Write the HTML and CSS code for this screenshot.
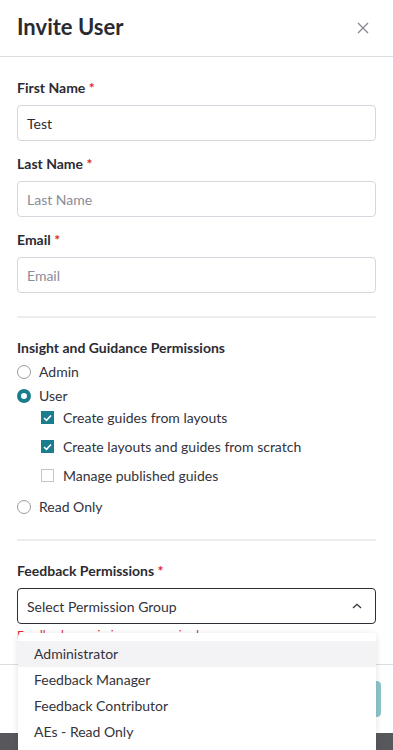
FILE: index.html
```html
<!DOCTYPE html>
<html lang="en">
<head>
  <meta charset="UTF-8" />
  <title>Invite User</title>
  <meta name="viewport" content="width=device-width, initial-scale=1.0" />
  <link rel="stylesheet" href="styles.css">
</head>
<body>
  <div class="modal">
    <header class="modal-header">
      <h1>Invite User</h1>
      <button class="close" aria-label="Close">
        <svg width="12" height="12" viewBox="0 0 12 12"><path d="M1 1L11 11M11 1L1 11" stroke="#8a8a94" stroke-width="1.4" fill="none"/></svg>
      </button>
    </header>

    <div class="modal-body">
      <!-- Basic info -->
      <div class="field">
        <label>First Name <span class="req">*</span></label>
        <input type="text" value="Test" />
      </div>
      <div class="field">
        <label>Last Name <span class="req">*</span></label>
        <input type="text" placeholder="Last Name" />
      </div>
      <div class="field">
        <label>Email <span class="req">*</span></label>
        <input type="email" placeholder="Email" />
      </div>

      <hr class="divider" />

      <!-- Insight permissions -->
      <div class="group">
        <div class="group-title">Insight and Guidance Permissions</div>
        <div class="radio"><span class="dot"></span>Admin</div>
        <div class="radio"><span class="dot on"></span>User</div>
        <div class="checks">
          <div class="check"><span class="box on"><svg width="9" height="8" viewBox="0 0 9 8"><path d="M1 4L3.5 6.3L8 1.5" stroke="#fff" stroke-width="1.6" fill="none"/></svg></span>Create guides from layouts</div>
          <div class="check"><span class="box on"><svg width="9" height="8" viewBox="0 0 9 8"><path d="M1 4L3.5 6.3L8 1.5" stroke="#fff" stroke-width="1.6" fill="none"/></svg></span>Create layouts and guides from scratch</div>
          <div class="check"><span class="box"></span>Manage published guides</div>
        </div>
        <div class="radio"><span class="dot"></span>Read Only</div>
      </div>

      <hr class="divider" />

      <!-- Feedback permissions -->
      <div class="field select-field">
        <label>Feedback Permissions <span class="req">*</span></label>
        <div class="select">
          <span>Select Permission Group</span>
          <svg width="10" height="6" viewBox="0 0 10 6"><path d="M1 5L5 1.3L9 5" stroke="#333" stroke-width="1.3" fill="none"/></svg>
        </div>
        <div class="error">Feedback permissions are required.</div>
        <ul class="dropdown">
          <li class="active">Administrator</li>
          <li>Feedback Manager</li>
          <li>Feedback Contributor</li>
          <li>AEs - Read Only</li>
        </ul>
      </div>
    </div>

    <footer class="modal-footer">
      <button class="btn">Cancel</button>
      <button class="btn primary">Invite</button>
    </footer>
  </div>
  <div class="backdrop"></div>
</body>
</html>
```
FILE: styles.css
```css
body {
  margin: 0;
  font-family: 'Lato', 'Open Sans', sans-serif;
  background: #fff;
  color: #2b2b33;
  width: 393px;
  height: 750px;
  overflow: hidden;
}

.modal {
  height: 733px;
  display: flex;
  flex-direction: column;
  background: #fff;
}

.modal-header {
  display: flex;
  justify-content: space-between;
  align-items: center;
  height: 56px;
  padding: 0 24px 0 17px;
  border-bottom: 1px solid #dcdce3;
  box-sizing: content-box;
}

.modal-header h1 {
  margin: 0;
  font-size: 22px;
  font-weight: 700;
  color: #2a2a32;
  padding-bottom: 4px;
}

.close {
  background: none;
  border: none;
  padding: 0;
  display: flex;
}

.modal-body {
  flex: 1;
  padding: 23px 17px 0;
}

.field {
  margin-bottom: 15px;
}

.field label {
  display: block;
  font-size: 14px;
  font-weight: 700;
  margin-bottom: 9px;
  line-height: 16px;
}

.req {
  color: #e0262f;
}

.field input {
  box-sizing: border-box;
  width: 100%;
  height: 36px;
  border: 1px solid #d6d6de;
  border-radius: 4px;
  padding: 0 9px;
  font-family: inherit;
  font-size: 14px;
  color: #2b2b33;
}

.field input::placeholder {
  color: #8c8c96;
}

.divider {
  border: none;
  height: 2px;
  background: #ededf0;
  margin: 23px 0 22px;
}

.group-title {
  font-size: 14px;
  font-weight: 700;
  line-height: 16px;
  margin-bottom: 4px;
}

.radio, .check {
  display: flex;
  align-items: center;
  font-size: 14px;
  line-height: 16px;
  color: #33333b;
}

.radio {
  height: 24px;
}

.dot {
  box-sizing: border-box;
  width: 14px;
  height: 14px;
  border-radius: 50%;
  border: 1px solid #9a9aa3;
  margin-right: 8px;
}

.dot.on {
  border: 4px solid #1a7d8e;
}

.checks {
  padding-left: 24px;
  margin: -5px 0 5px;
}

.check {
  height: 29px;
}

.box {
  box-sizing: border-box;
  width: 13px;
  height: 13px;
  border: 1px solid #c4c4cc;
  margin-right: 9px;
  display: flex;
  align-items: center;
  justify-content: center;
}

.box.on {
  background: #1a7d8e;
  border-color: #1a7d8e;
}

.group + .divider {
  margin-top: 20px;
}

.select-field {
  position: relative;
}

.select {
  box-sizing: border-box;
  height: 36px;
  border: 1px solid #2e2e36;
  border-radius: 4px;
  padding: 0 13px 0 9px;
  display: flex;
  align-items: center;
  justify-content: space-between;
  font-size: 14px;
  color: #33333b;
}

.error {
  color: #e0262f;
  font-size: 12px;
  margin-top: 3px;
}

.dropdown {
  position: absolute;
  top: 70px;
  left: 1px;
  right: 0;
  margin: 0;
  padding: 8px 0 10px;
  list-style: none;
  background: #fff;
  border-radius: 4px;
  box-shadow: 0 1px 6px rgba(0, 0, 0, 0.12);
  z-index: 10;
}

.dropdown li {
  height: 26px;
  line-height: 26px;
  padding: 0 16px;
  font-size: 14px;
  color: #33333b;
}

.dropdown li.active {
  background: #f3f3f6;
}

.modal-footer {
  height: 69px;
  border-top: 1px solid #dcdce3;
  display: flex;
  justify-content: flex-end;
  align-items: flex-start;
  gap: 8px;
  padding: 16px 12px 0;
  box-sizing: border-box;
}

.btn {
  height: 36px;
  padding: 0 18px;
  border-radius: 4px;
  border: 1px solid #d6d6de;
  background: #fff;
  font-family: inherit;
  font-size: 14px;
}

.btn.primary {
  background: #8ec3cc;
  border-color: #8ec3cc;
  color: #fff;
}

.backdrop {
  height: 17px;
  background: #58585c;
}
```
